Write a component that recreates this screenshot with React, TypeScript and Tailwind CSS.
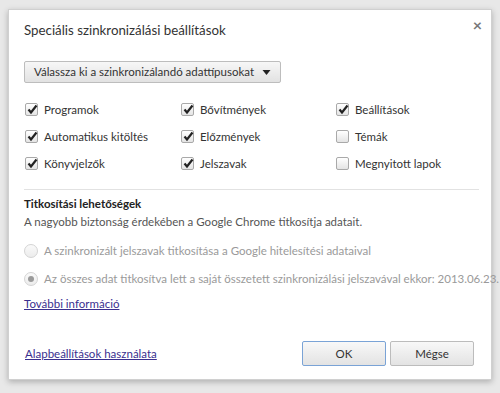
import React from "react";

const font = { fontFamily: 'Lato, "Open Sans", sans-serif' };

function Check({ checked }: { checked: boolean }) {
  return (
    <span className="relative inline-block w-[13px] h-[13px] rounded-[2px] border border-[#a9a9a9] bg-gradient-to-b from-[#ffffff] to-[#e4e4e4] shrink-0">
      {checked && (
        <svg
          viewBox="0 0 13 13"
          className="absolute left-[0px] top-[-1px] w-[13px] h-[13px]"
        >
          <path
            d="M2.5 6.5 L5 9.5 L10.5 2.5"
            fill="none"
            stroke="#222"
            strokeWidth="2.2"
          />
        </svg>
      )}
    </span>
  );
}

function Item({ label, checked }: { label: string; checked: boolean }) {
  return (
    <div className="flex items-center gap-[6px] h-[27px]">
      <Check checked={checked} />
      <span className="text-[11.5px] text-[#333]">{label}</span>
    </div>
  );
}

function Radio({ on, label }: { on: boolean; label: string }) {
  return (
    <div className="flex items-center gap-[6px] h-[28px]">
      <span className="flex items-center justify-center w-[14px] h-[14px] rounded-full border border-[#d4d4d4] bg-gradient-to-b from-[#fafafa] to-[#ececec] shrink-0">
        {on && <span className="w-[6px] h-[6px] rounded-full bg-[#9a9a9a]" />}
      </span>
      <span className="text-[11.5px] text-[#9a9a9a] whitespace-nowrap">
        {label}
      </span>
    </div>
  );
}

export default function App() {
  return (
    <div
      className="w-[500px] h-[393px] bg-[#e8e8e8] pt-[9px] pl-[8px] overflow-hidden"
      style={font}
    >
      <div className="w-[484px] h-[371px] bg-white shadow-[0_2px_6px_rgba(0,0,0,0.25)] border border-[#d0d0d0] flex flex-col pl-[15px] pr-[12px]">
        <div className="flex justify-between items-start pt-[10px]">
          <h1 className="text-[13.3px] text-[#333] leading-[20px]">
            Speciális szinkronizálási beállítások
          </h1>
          <span className="text-[16px] text-[#777] font-bold leading-[12px] -mt-[1px] -mr-[3px]">
            ×
          </span>
        </div>

        <div className="mt-[21px] flex">
          <button className="h-[22px] px-[9px] flex items-center gap-[8px] border border-[#bdbdbd] rounded-[2px] bg-gradient-to-b from-[#f7f7f7] to-[#e2e2e2] text-[11.5px] text-[#333]">
            Válassza ki a szinkronizálandó adattípusokat
            <svg viewBox="0 0 8 5" className="w-[9px] h-[5px]">
              <path d="M0 0 H8 L4 5 Z" fill="#222" />
            </svg>
          </button>
        </div>

        <div className="mt-[13px] grid grid-cols-[156px_155px_1fr] pl-[1px]">
          <Item label="Programok" checked />
          <Item label="Bővítmények" checked />
          <Item label="Beállítások" checked />
          <Item label="Automatikus kitöltés" checked />
          <Item label="Előzmények" checked />
          <Item label="Témák" checked={false} />
          <Item label="Könyvjelzők" checked />
          <Item label="Jelszavak" checked />
          <Item label="Megnyitott lapok" checked={false} />
        </div>

        <div className="mt-[12px] h-px bg-[#e2e2e2]" />

        <div className="mt-[6px] text-[11.5px] font-bold text-[#222] leading-[16px]">
          Titkosítási lehetőségek
        </div>
        <div className="mt-[1px] text-[11.5px] text-[#555] leading-[17px]">
          A nagyobb biztonság érdekében a Google Chrome titkosítja adatait.
        </div>

        <div className="mt-[7px]">
          <Radio
            on={false}
            label="A szinkronizált jelszavak titkosítása a Google hitelesítési adataival"
          />
          <Radio
            on
            label="Az összes adat titkosítva lett a saját összetett szinkronizálási jelszavával ekkor: 2013.06.23."
          />
        </div>

        <a className="mt-[2px] text-[11.5px] text-[#3a2f8f] underline leading-[17px] self-start">
          További információ
        </a>

        <div className="mt-[29px] flex items-center justify-between pr-[5px]">
          <a className="text-[11.5px] text-[#3a2f8f] underline ml-[1px] mt-[1px]">
            Alapbeállítások használata
          </a>
          <div className="flex gap-[4px]">
            <button className="w-[84px] h-[25px] rounded-[2px] border border-[#7aa3d6] bg-gradient-to-b from-[#f8f8f8] to-[#e3e3e3] text-[11.5px] text-[#333]">
              OK
            </button>
            <button className="w-[84px] h-[25px] rounded-[2px] border border-[#bcbcbc] bg-gradient-to-b from-[#f8f8f8] to-[#e3e3e3] text-[11.5px] text-[#333]">
              Mégse
            </button>
          </div>
        </div>
      </div>
    </div>
  );
}
